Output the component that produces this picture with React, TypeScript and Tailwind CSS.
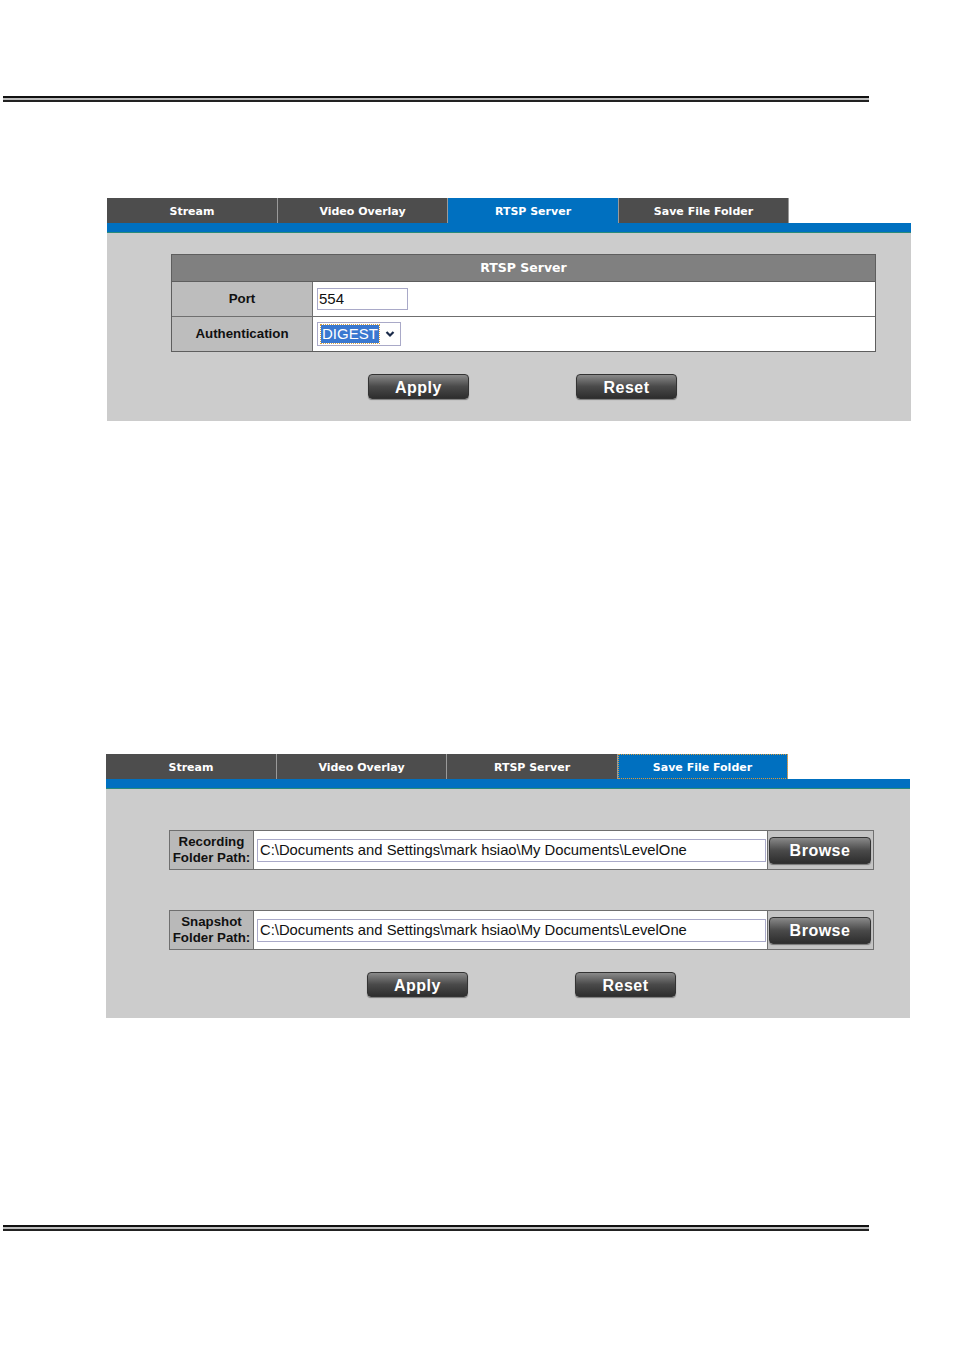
import React from "react";

const tabFont = { fontFamily: '"DejaVu Sans", Verdana, sans-serif' };
const arial = { fontFamily: '"Liberation Sans", Arial, sans-serif' };

function DoubleRule() {
  return (
    <div className="ml-[3px] w-[866px]">
      <div className="h-[2px] bg-[#111]" />
      <div className="h-[2px] bg-[#bdbdbd]" />
      <div className="h-[2px] bg-[#222]" />
    </div>
  );
}

function Tabs({ active }: { active: number }) {
  const names = ["Stream", "Video Overlay", "RTSP Server", "Save File Folder"];
  const widths = ["w-[171px]", "w-[170px]", "w-[171px]", "w-[170px]"];
  return (
    <div className="flex h-[25px]">
      {names.map((n, i) => (
        <div
          key={n}
          style={tabFont}
          className={
            widths[i] +
            " flex items-center justify-center pt-[3px] text-[11px] font-bold text-white border-r border-[#9a9a9a] " +
            (i === active ? "bg-[#0070c0]" : "bg-[#4d4d4d]") +
            (i === active && active === 3 ? " outline outline-1 outline-dotted outline-[#d99a3a] -outline-offset-1" : "")
          }
        >
          {n}
        </div>
      ))}
    </div>
  );
}

function Btn({ label, w = "w-[101px]", h = "h-[25px]" }: { label: string; w?: string; h?: string }) {
  return (
    <div
      style={arial}
      className={
        w +
        " " +
        h +
        " rounded-[4px] bg-gradient-to-b from-[#8a8a8a] via-[#4a4a4a] to-[#2e2e2e] border border-[#333] shadow-[0_1px_1px_rgba(0,0,0,0.4)] flex items-center justify-center pt-[2px] text-white font-bold text-[16px] tracking-[0.5px]"
      }
    >
      {label}
    </div>
  );
}

function PathRow({ l1, l2 }: { l1: string; l2: string }) {
  return (
    <div className="ml-[63px] w-[705px] h-[40px] flex border border-[#6f6f6f] bg-[#c4c4c4]">
      <div
        style={arial}
        className="w-[84px] border-r border-[#6f6f6f] bg-[#b9b9b9] flex flex-col items-center justify-center text-[13.3px] font-bold text-[#111] leading-[16px]"
      >
        <span>{l1}</span>
        <span>{l2}</span>
      </div>
      <div className="w-[514px] bg-white flex items-center border-r border-[#6f6f6f] pl-[3px]">
        <div
          style={arial}
          className="w-[509px] h-[23px] border border-[#a9a9c8] flex items-center pl-[2px] text-[14.8px] text-[#111]"
        >
          C:\Documents and Settings\mark hsiao\My Documents\LevelOne
        </div>
      </div>
      <div className="flex-1 flex items-center pl-[1px]">
        <Btn label="Browse" w="w-[102px]" h="h-[27px]" />
      </div>
    </div>
  );
}

export default function App() {
  return (
    <div className="w-[954px] h-[1351px] bg-white relative">
      <div className="pt-[96px]">
        <DoubleRule />
      </div>

      {/* Panel 1 */}
      <div className="ml-[107px] mt-[96px] w-[804px]">
        <Tabs active={2} />
        <div className="h-[10px] bg-[#0070c0] border-b border-[#2a8a7a]" />
        <div className="h-[188px] bg-[#cccccc] pt-[21px]">
          <div className="ml-[64px] w-[705px] border border-[#5e5e5e]">
            <div
              style={tabFont}
              className="h-[27px] bg-[#808080] border-b border-[#5e5e5e] flex items-center justify-center pt-[1px] text-white font-bold text-[12.5px]"
            >
              RTSP Server
            </div>
            <div className="flex h-[35px] border-b border-[#6f6f6f]">
              <div
                style={arial}
                className="w-[141px] bg-[#bdbdbd] border-r border-[#6f6f6f] flex items-center justify-center text-[13.3px] font-bold text-[#111]"
              >
                Port
              </div>
              <div className="flex-1 bg-white flex items-center pl-[4px]">
                <div
                  style={arial}
                  className="w-[91px] h-[22px] border border-[#a9a9c8] flex items-center pl-[1px] text-[15px] text-[#111]"
                >
                  554
                </div>
              </div>
            </div>
            <div className="flex h-[34px]">
              <div
                style={arial}
                className="w-[141px] bg-[#bdbdbd] border-r border-[#6f6f6f] flex items-center justify-center text-[13.3px] font-bold text-[#111]"
              >
                Authentication
              </div>
              <div className="flex-1 bg-white flex items-center pl-[4px]">
                <div className="w-[84px] h-[24px] border border-[#a9a9c8] flex items-center pl-[3px] gap-[6px]">
                  <span
                    style={arial}
                    className="bg-[#3a78d0] text-white text-[15px] leading-[18px] px-[1px] outline outline-1 outline-dotted outline-[#d9a040]"
                  >
                    DIGEST
                  </span>
                  <svg width="10" height="8" viewBox="0 0 10 8">
                    <path d="M1.5 2 L5 5.5 L8.5 2" stroke="#1a2a4a" strokeWidth="2.2" fill="none" />
                  </svg>
                </div>
              </div>
            </div>
          </div>
          <div className="flex mt-[22px]">
            <div className="ml-[261px]">
              <Btn label="Apply" />
            </div>
            <div className="ml-[107px]">
              <Btn label="Reset" />
            </div>
          </div>
        </div>
      </div>

      {/* Panel 2 */}
      <div className="ml-[106px] mt-[333px] w-[804px]">
        <Tabs active={3} />
        <div className="h-[10px] bg-[#0070c0] border-b border-[#2a8a7a]" />
        <div className="h-[229px] bg-[#cccccc] pt-[41px]">
          <PathRow l1="Recording" l2="Folder Path:" />
          <div className="mt-[40px]">
            <PathRow l1="Snapshot" l2="Folder Path:" />
          </div>
          <div className="flex mt-[22px]">
            <div className="ml-[261px]">
              <Btn label="Apply" />
            </div>
            <div className="ml-[107px]">
              <Btn label="Reset" />
            </div>
          </div>
        </div>
      </div>

      <div className="mt-[207px]">
        <DoubleRule />
      </div>
    </div>
  );
}
